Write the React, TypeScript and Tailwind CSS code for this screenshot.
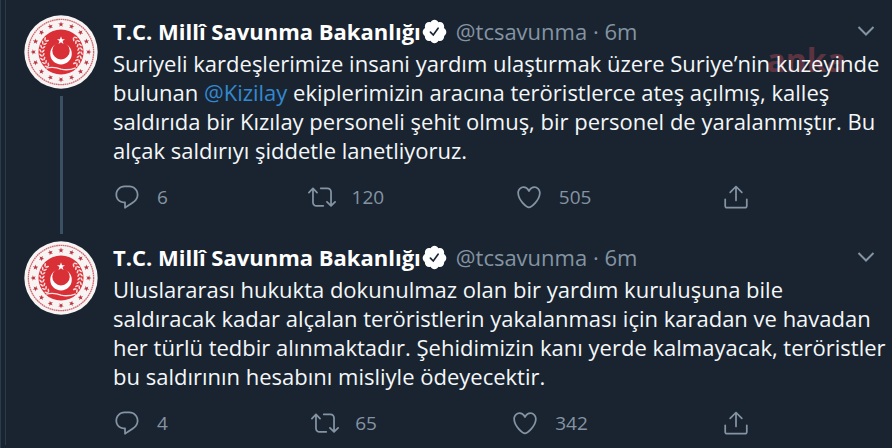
import React from 'react';

type Tweet = {
  id: number;
  lines: React.ReactNode[];
  replies: number;
  retweets: number;
  likes: number;
};

const TWEETS: Tweet[] = [
  {
    id: 1,
    lines: [
      'Suriyeli kardeşlerimize insani yardım ulaştırmak üzere Suriye’nin kuzeyinde',
      <>
        bulunan{' '}
        <a href="#kizilay" className="text-[#3289d0]">
          @Kizilay
        </a>{' '}
        ekiplerimizin aracına teröristlerce ateş açılmış, kalleş
      </>,
      'saldırıda bir Kızılay personeli şehit olmuş, bir personel de yaralanmıştır. Bu',
      'alçak saldırıyı şiddetle lanetliyoruz.',
    ],
    replies: 6,
    retweets: 120,
    likes: 505,
  },
  {
    id: 2,
    lines: [
      'Uluslararası hukukta dokunulmaz olan bir yardım kuruluşuna bile',
      'saldıracak kadar alçalan teröristlerin yakalanması için karadan ve havadan',
      'her türlü tedbir alınmaktadır. Şehidimizin kanı yerde kalmayacak, teröristler',
      'bu saldırının hesabını misliyle ödeyecektir.',
    ],
    replies: 4,
    retweets: 65,
    likes: 342,
  },
];

const ICONS = {
  reply:
    'M14.046 2.242l-4.148-.01h-.002c-4.374 0-7.8 3.427-7.8 7.802 0 4.098 3.186 7.206 7.465 7.37v3.828c0 .108.044.286.12.403.142.225.384.347.632.347.138 0 .277-.038.402-.118.264-.168 6.473-4.14 8.088-5.506 1.902-1.61 3.04-3.97 3.043-6.312v-.017c-.006-4.367-3.43-7.787-7.8-7.788zm3.787 12.972c-1.134.96-4.862 3.405-6.772 4.643V16.67c0-.414-.335-.75-.75-.75h-.396c-3.66 0-6.318-2.476-6.318-5.886 0-3.534 2.768-6.302 6.3-6.302l4.147.01h.002c3.532 0 6.3 2.766 6.302 6.296-.003 1.91-.942 3.844-2.514 5.176z',
  retweet:
    'M23.77 15.67c-.292-.293-.767-.293-1.06 0l-2.22 2.22V7.65c0-2.068-1.683-3.75-3.75-3.75h-5.85c-.414 0-.75.336-.75.75s.336.75.75.75h5.85c1.24 0 2.25 1.01 2.25 2.25v10.24l-2.22-2.22c-.293-.293-.768-.293-1.06 0s-.294.768 0 1.06l3.5 3.5c.145.147.337.22.53.22s.383-.072.53-.22l3.5-3.5c.294-.292.294-.767 0-1.06zm-10.66 3.28H7.26c-1.24 0-2.25-1.01-2.25-2.25V6.46l2.22 2.22c.148.147.34.22.532.22s.384-.073.53-.22c.293-.293.293-.768 0-1.06l-3.5-3.5c-.293-.294-.768-.294-1.06 0l-3.5 3.5c-.294.292-.294.767 0 1.06s.767.293 1.06 0l2.22-2.22V16.7c0 2.068 1.683 3.75 3.75 3.75h5.85c.414 0 .75-.336.75-.75s-.337-.75-.75-.75z',
  like: 'M12 21.638h-.014C9.403 21.59 1.95 14.856 1.95 8.478c0-3.064 2.525-5.754 5.403-5.754 2.29 0 3.83 1.58 4.646 2.73.814-1.148 2.354-2.73 4.645-2.73 2.88 0 5.404 2.69 5.404 5.755 0 6.376-7.454 13.11-10.037 13.157H12zM7.354 4.225c-2.08 0-3.903 1.988-3.903 4.255 0 5.74 7.034 11.596 8.55 11.658 1.518-.062 8.55-5.917 8.55-11.658 0-2.267-1.823-4.255-3.903-4.255-2.528 0-3.94 2.936-3.952 2.965-.23.562-1.156.562-1.387 0-.014-.03-1.425-2.965-3.954-2.965z',
  share:
    'M17.53 7.47l-5-5c-.293-.293-.768-.293-1.06 0l-5 5c-.294.293-.294.768 0 1.06s.767.294 1.06 0l3.72-3.72V15c0 .414.336.75.75.75s.75-.336.75-.75V4.81l3.72 3.72c.146.147.338.22.53.22s.384-.072.53-.22c.293-.293.293-.767 0-1.06zM19.708 21.944H4.292C3.028 21.944 2 20.916 2 19.652V14c0-.414.336-.75.75-.75s.75.336.75.75v5.652c0 .437.355.792.792.792h15.416c.437 0 .792-.355.792-.792V14c0-.414.336-.75.75-.75s.75.336.75.75v5.652c0 1.264-1.028 2.292-2.292 2.292z',
};

const STAR = 'M0 -10L2.4 -3.2L9.5 -3.1L3.8 1.2L5.9 8.1L0 4L-5.9 8.1L-3.8 1.2L-9.5 -3.1L-2.4 -3.2Z';

// Leaves of the wreath, as angles measured from the horizontal.
const LEAVES = [-42, -30, -18, -6, 6, 18, 30, 42];

function Emblem() {
  return (
    <svg viewBox="0 0 220 220" className="size-[74px] shrink-0" aria-hidden="true">
      <circle cx="110" cy="110" r="109" fill="#f8f4f4" />
      <circle cx="110" cy="110" r="97" fill="none" stroke="#cf6a70" strokeWidth="4" strokeDasharray="5 1.5" />
      {Array.from({ length: 16 }, (_, i) => (
        <g key={i} transform={`rotate(${i * 22.5} 110 110) translate(110 28) scale(0.85)`}>
          <path d={STAR} fill="#b8323c" />
        </g>
      ))}
      <circle cx="110" cy="110" r="67" fill="#d92f36" />
      {[0, 180].map((side) => (
        <g key={side} fill="#f3dcdc">
          {LEAVES.map((angle) => (
            <g key={angle} transform={`rotate(${side + angle} 110 110) translate(167 110)`}>
              <ellipse cx="-5" cy="0" rx="2.5" ry="6" transform="rotate(35)" />
              <ellipse cx="5" cy="0" rx="2.5" ry="6" transform="rotate(-35)" />
            </g>
          ))}
        </g>
      ))}
      <circle cx="110" cy="115" r="32" fill="#fff" />
      <circle cx="110" cy="106" r="26" fill="#d92f36" />
      <path d={STAR} transform="translate(110 76) scale(1.25)" fill="#fff" />
      <path d="M66 158Q88 152 110 161Q132 166 154 157" fill="none" stroke="#f6e4e4" strokeWidth="4" />
    </svg>
  );
}

function VerifiedBadge() {
  return (
    <svg viewBox="0 0 24 24" className="size-[27px] shrink-0" role="img" aria-label="Onaylanmış hesap">
      <path
        fill="#fff"
        d="M22.5 12.5c0-1.58-.875-2.95-2.148-3.6.154-.435.238-.905.238-1.4 0-2.21-1.71-3.998-3.818-3.998-.47 0-.92.084-1.336.25C14.818 2.415 13.51 1.5 12 1.5s-2.816.917-3.437 2.25c-.415-.165-.866-.25-1.336-.25-2.11 0-3.818 1.79-3.818 4 0 .494.083.964.237 1.4-1.272.65-2.147 2.018-2.147 3.6 0 1.495.782 2.798 1.942 3.486-.02.17-.032.34-.032.514 0 2.21 1.708 4 3.818 4 .47 0 .92-.086 1.335-.25.62 1.334 1.926 2.25 3.437 2.25 1.512 0 2.818-.916 3.437-2.25.415.163.865.248 1.336.248 2.11 0 3.818-1.79 3.818-4 0-.174-.012-.344-.033-.513 1.158-.687 1.943-1.99 1.943-3.484z"
      />
      <path d="M8.4 12.6l2.5 2.5 4.3-6" fill="none" stroke="#1a2430" strokeWidth="1.5" strokeLinecap="round" />
    </svg>
  );
}

function Action({ label, path, count }: { label: string; path: string; count?: number }) {
  return (
    <button type="button" aria-label={label} className="flex items-center gap-4 text-[19px] leading-7">
      <svg viewBox="0 0 24 24" className="size-7" fill="currentColor" aria-hidden="true">
        <path d={path} />
      </svg>
      {count !== undefined && <span className="min-w-5 text-left">{count}</span>}
    </button>
  );
}

function TweetItem({ tweet, threaded }: { tweet: Tweet; threaded: boolean }) {
  return (
    <article className="flex gap-[15px] pr-4 pl-[18px]">
      <div className="flex flex-col items-center gap-[7px]">
        <Emblem />
        {threaded && <div className="mb-[-23px] w-[3px] grow bg-[#3b5063]" />}
      </div>
      <div className="min-w-0 grow">
        <header className="flex h-8 items-center text-[22px] whitespace-nowrap">
          <span className="font-bold text-white">T.C. Millî Savunma Bakanlığı</span>
          <span className="flex">
            <VerifiedBadge />
          </span>
          <span className="ml-2 text-[#8494a3]">@tcsavunma · 6m</span>
          <button type="button" aria-label="Diğer" className="ml-auto text-[#8494a3]">
            <svg viewBox="0 0 20 20" className="size-5" fill="none" stroke="currentColor" strokeWidth="2" aria-hidden="true">
              <path d="M2.5 6l7.5 7.5L17.5 6" />
            </svg>
          </button>
        </header>
        <p className="mt-0.5 text-[22px] leading-[29px] whitespace-nowrap text-[#f4f7f9]">
          {tweet.lines.map((line, i) => (
            <span key={i} className="block">
              {line}
            </span>
          ))}
        </p>
        <footer className="mt-[18px] flex max-w-[637px] justify-between text-[#8494a3]">
          <Action label="Yanıtla" path={ICONS.reply} count={tweet.replies} />
          <Action label="Retweetle" path={ICONS.retweet} count={tweet.retweets} />
          <Action label="Beğen" path={ICONS.like} count={tweet.likes} />
          <Action label="Paylaş" path={ICONS.share} />
        </footer>
      </div>
    </article>
  );
}

export default function App() {
  return (
    <main className="relative min-h-screen overflow-hidden border-l border-[#2b3b49] bg-[#1a2430] pl-1 font-['Open_Sans',sans-serif]">
      {/* Agency watermark, under the tweet text */}
      <span className="pointer-events-none absolute top-[40px] right-[46px] text-[32px] leading-10 font-bold text-[#703846]/80">
        anka
      </span>
      <div className="relative flex flex-col gap-[30px] border-l border-[#2b3b49] pt-[15px] pb-2">
        {TWEETS.map((tweet, i) => (
          <TweetItem key={tweet.id} tweet={tweet} threaded={i < TWEETS.length - 1} />
        ))}
      </div>
    </main>
  );
}
